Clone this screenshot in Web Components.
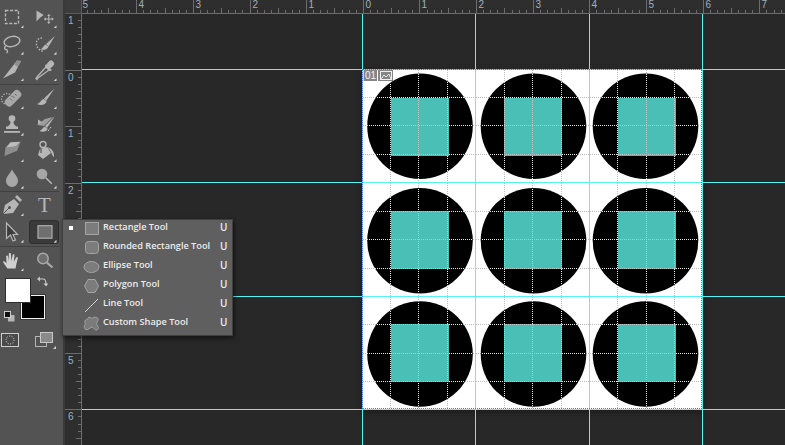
<!doctype html>
<html><head><meta charset="utf-8"><style>
html,body{margin:0;padding:0;width:785px;height:445px;overflow:hidden;background:#282828}
</style></head><body>
<ps-app></ps-app>
<script>
const S = '#b6b6b6';
const ICONS = {
  marquee: `<rect x="5.5" y="5.5" width="13" height="13" fill="none" stroke="${S}" stroke-width="1.4" stroke-dasharray="3 1.6"/>`,
  move: `<path d="M3.5 5.5v11l3.2-3.4 4-3z" fill="${S}"/><path d="M15.8 10v8M11.800 14h8" stroke="${S}" stroke-width="1.1"/><path d="M15.8 9l-1.700 2h3.400zM15.800 19l-1.700-2h3.400zM10.800 14l2-1.700v3.400zM20.800 14l-2-1.700v3.400z" fill="${S}"/>`,
  lasso: `<ellipse cx="12" cy="9.5" rx="8" ry="5" transform="rotate(-12 12 9.5)" fill="none" stroke="${S}" stroke-width="1.5"/><path d="M6 14c-2 1-2 3 0 3.5s2 2.5.5 3.5" fill="none" stroke="${S}" stroke-width="1.3"/>`,
  quick: `<path d="M9 6c-4 0-6 3-5.500 6.500S7 19 10 19" fill="none" stroke="${S}" stroke-width="1.4" stroke-dasharray="1.500 1.500"/><path d="M22 4l-9 8 2.500 2.500z" fill="${S}"/><path d="M12.500 12.500c-2 1-2 3-5 5 3 .8 7 .5 8-3z" fill="${S}"/>`,
  knife: `<path d="M21 3l-4-.4L3 20.500 15 14.500z" fill="${S}"/><path d="M17 2.600L21 3l-3.500 6-3.500-3z" fill="#8f8f8f"/>`,
  dropper: `<path d="M5 20l-1 1.500-1-.8 1-1.700L13 9l3 3z" fill="none" stroke="${S}" stroke-width="1.300"/><path d="M13 6l6 6-2.200 1.200-5-5z" fill="${S}"/><rect x="14.500" y="2.500" width="6" height="7.500" rx="2.500" transform="rotate(45 17.500 6.200)" fill="${S}"/>`,
  heal: `<circle cx="7" cy="13" r="5.500" fill="none" stroke="${S}" stroke-width="1.300" stroke-dasharray="1.200 1.500"/><rect x="3.500" y="8" width="19" height="8.500" rx="3.500" transform="rotate(-45 13 12.200)" fill="#a8a8a8"/><path d="M10 12.500l2 2M12.500 10l2 2M15 8l1.500 1.500M10.500 9.500l1 1" stroke="#666" stroke-width="1"/>`,
  brush: `<path d="M21.500 2.500L11 12.500l2.200 2.200z" fill="${S}"/><path d="M10.500 13c-2.500.5-2.500 3.500-6.500 5 3 1.800 9 1.300 9.500-3z" fill="${S}"/>`,
  stamp: `<circle cx="12" cy="5.500" r="3.300" fill="${S}"/><path d="M10.500 8h3c0 3.500 1 4 3 5.500H18V16H6v-2.500h1.500c2-1.500 3-2 3-5.500z" fill="${S}"/><rect x="4" y="18" width="16" height="1.800" fill="${S}"/>`,
  history: `<path d="M4 12l8-6 8-2-9 9z" fill="${S}" opacity=".75"/><path d="M22 3L12 13l2 2z" fill="${S}"/><path d="M11.500 13.500c-1.500 1-2 3-5 4.500 2.500 1.200 8 1 8-2.500z" fill="${S}"/><path d="M9 9L5 6.500v5z" fill="${S}"/><path d="M15 18l3-4" stroke="#eee" stroke-dasharray="1 1"/>`,
  eraser: `<path d="M10.500 3.300l10-.6-4.500 4.800-10.500 1.500z" fill="#bdbdbd"/><path d="M5.500 8.500L16 7.300l4.500-4.600-3.300 9L4.500 17z" fill="#8e8e8e"/>`,
  bucket: `<path d="M7 10l7-2 4 6-8 6-5-4z" fill="${S}"/><circle cx="10" cy="5.500" r="3" fill="none" stroke="${S}" stroke-width="1.400"/><path d="M8 10v4" stroke="#666" stroke-width="1.500"/><path d="M14 8c4 1 7.500 4 7 10-2.500-1-1.500-5-7-10z" fill="${S}"/>`,
  drop: `<path d="M12 3.500c2.500 5 6 7 6 11.500a6 6 0 0 1-12 0c0-4.500 3.500-6.500 6-11.500z" fill="#a8a8a8"/>`,
  dodge: `<circle cx="9" cy="8" r="5.300" fill="#a6a6a6"/><path d="M12.800 11.800l6 6" stroke="${S}" stroke-width="1.500"/>`,
  pen: `<path d="M3 21l2-9 9-6 5 5-6 9z" fill="${S}"/><path d="M3 21l6-6" stroke="#555" stroke-width="1"/><circle cx="9.500" cy="14.500" r="1.500" fill="#555"/><path d="M15 4l2-2 5 5-2 2z" fill="${S}"/>`,
  arrow: `<path d="M6.500 3v15.500l4-3.500 2.500 6 2.500-1-2.500-5.500h4.500z" fill="#3c3c3c" stroke="${S}" stroke-width="1.200"/>`,
  rect: `<rect x="5" y="5.700" width="14" height="12.500" fill="#6f6f6f" stroke="#b5b5b5" stroke-width="1.100"/>`,
  hand: `<g transform="translate(1.400 3.200) scale(.86)"><path d="M7 20c-2-3-5-6-5-8 1-1 3 0 4 2.500L5.500 6c0-1.500 2-1.500 2.300 0l1 5.500-.2-8c0-1.700 2.400-1.700 2.500 0l.5 8L13 4.500c.3-1.500 2.300-1.300 2.200.2l-.7 7.500L17 7.500c.7-1.300 2.500-.7 2.100.7L17 17l-.5 3z" fill="#d0d0d0"/></g>`,
  zoom: `<circle cx="10" cy="10.500" r="5.200" fill="#6f6f6f" stroke="#a8a8a8" stroke-width="1.500"/><path d="M14 14.700l5.500 4.800" stroke="#a8a8a8" stroke-width="2.200"/>`
};
const MENU = {
  rect: `<rect x="2.500" y="2.500" width="13" height="12" fill="#7c7c7c" stroke="#a4a4a4"/>`,
  round: `<rect x="2.500" y="2.500" width="13" height="12" rx="3" fill="#7c7c7c" stroke="#a4a4a4"/>`,
  ell: `<ellipse cx="8.500" cy="9" rx="7.500" ry="5.500" fill="#7c7c7c" stroke="#a4a4a4"/>`,
  poly: `<path d="M5 2.500h7L15.500 9 12 15.500H5L1.500 9z" fill="#7c7c7c" stroke="#a4a4a4"/>`,
  line: `<path d="M2 16L15 3" stroke="#d0d0d0" stroke-width="1"/>`,
  shape: `<path d="M6 2c2 1 3 1.500 5 .5s5 .5 4 3-2 2-1 4 2.500 3 .5 5-3-1-5-2-4 3-6.500 2-2-3-1-5-1-3 0-4 2.500-.5 4-3.500z" fill="#7b7b7b" stroke="#a4a4a4"/>`
};

class Base extends HTMLElement {
  constructor() {
    super();
    this.attachShadow({ mode: 'open' });
  }
  connectedCallback() {
    this.shadowRoot.innerHTML = this.render();
  }
}

class PsTool extends Base {
  render() {
    const name = this.getAttribute('icon');
    const active = this.hasAttribute('active');
    const corner = this.hasAttribute('nocorner') ? '' : '<i></i>';
    const body = name === 'type'
      ? '<span>T</span>'
      : `<svg width="24" height="24" viewBox="0 0 24 24">${ICONS[name]}</svg>`;
    return `<style>
      :host{display:flex;align-items:center;justify-content:center;position:relative;height:26.5px;min-width:0}
      svg{display:block;position:relative;flex:none}
      span{font:21px/24px "Liberation Serif",serif;color:#b6b6b6;position:relative}
      i{position:absolute;left:calc(50% + 9px);top:calc(50% + 8px);width:3px;height:3px;background:#d0d0d0;clip-path:polygon(100% 0,100% 100%,0 100%)}
      b{position:absolute;left:1px;right:2px;top:1px;bottom:1.500px;background:#3a3a3a;border:1px solid #2e2e2e;border-radius:3px;box-sizing:border-box}
    </style>${active ? '<b></b>' : ''}${body}${corner}`;
  }
}
customElements.define('ps-tool', PsTool);

class PsColors extends Base {
  render() {
    return `<style>
      :host{display:block;position:relative;height:51px;margin-top:2.500px}
      div{position:absolute;box-sizing:border-box}
      .fg{left:5px;top:2px;width:26px;height:25px;background:#fff;border:1px solid #2f2f2f;z-index:1}
      .bg{left:21px;top:19px;width:24px;height:24px;background:#000;border:1px solid #f2f2f2;outline:1px solid #3a3a3a}
      svg{position:absolute}
    </style>
    <div class="fg"></div><div class="bg"></div>
    <svg style="left:36px;top:0" width="12" height="12" viewBox="0 0 12 12"><path d="M3 3h4c2 0 3 1 3 5" fill="none" stroke="#c8c8c8" stroke-width="1.200"/><path d="M4 .5L1 3l3 2.500zM7.500 7.500h5L10 10.500z" fill="#c8c8c8"/></svg>
    <svg style="left:3px;top:34px" width="12" height="12" viewBox="0 0 12 12"><rect x="5" y="5" width="6.500" height="6.500" fill="#b5b5b5"/><rect x="1.500" y="1.500" width="6" height="6" fill="#111" stroke="#cfcfcf"/></svg>`;
  }
}
customElements.define('ps-colors', PsColors);

class PsBottom extends Base {
  render() {
    return `<style>
      :host{display:flex;height:26px;position:relative}
      svg{position:absolute;top:5px}
      i{position:absolute;left:53px;top:19px;width:3px;height:3px;background:#d0d0d0;clip-path:polygon(100% 0,100% 100%,0 100%)}
    </style>
    <svg style="left:1px;top:6px" width="18" height="14" viewBox="0 0 18 14"><rect x=".5" y=".5" width="17" height="13" fill="#4a4a4a" stroke="#d0d0d0"/><circle cx="9" cy="7" r="4" fill="none" stroke="#e0e0e0" stroke-dasharray="1 1.500"/></svg>
    <svg style="left:35px" width="18" height="15" viewBox="0 0 18 15"><rect x=".5" y="4.500" width="11" height="10" fill="none" stroke="#b5b5b5"/><rect x="5.500" y=".5" width="12" height="10" fill="#8a8a8a" stroke="#c8c8c8"/></svg>
    <i></i>`;
  }
}
customElements.define('ps-bottom', PsBottom);

class PsToolbar extends Base {
  render() {
    const row = (a, b, extra = '') => `<ps-tool icon="${a}"></ps-tool><ps-tool icon="${b}" ${extra}></ps-tool>`;
    return `<style>
      :host{display:block;width:63px;height:445px;background:#535353;flex:none;overflow:hidden}
      .g{display:grid;grid-template-columns:23px 33px;column-gap:5px}
      hr{height:1px;width:59px;margin:0;border:0;background:#404040}
    </style>
    <div class="g" style="padding-top:4px">${row('marquee','move')}${row('lasso','quick')}${row('knife','dropper')}</div>
    <hr style="margin-top:.5px">
    <div class="g">${row('heal','brush')}${row('stamp','history')}${row('eraser','bucket')}${row('drop','dodge')}</div>
    <hr>
    <div class="g">${row('pen','type','nocorner')}<ps-tool icon="arrow"></ps-tool><ps-tool icon="rect" active></ps-tool></div>
    <hr style="margin-top:1px">
    <div class="g"><ps-tool icon="hand"></ps-tool><ps-tool icon="zoom" nocorner></ps-tool></div>
    <ps-colors></ps-colors>
    <ps-bottom></ps-bottom>`;
  }
}
customElements.define('ps-toolbar', PsToolbar);

class PsRuler extends Base {
  render() {
    const v = this.hasAttribute('vertical');
    const len = v ? 431 : 703;
    const zero = v ? 56 : 281.3;
    const u = 56.65;
    const step = u / 8;
    let ticks = '';
    let text = '';
    const first = Math.ceil(-zero / step) - 8;
    const last = Math.floor((len - zero) / step);
    for (let i = first; i <= last; i++) {
      const p = Math.floor(zero + i * step) + 0.5;
      const m = ((i % 8) + 8) % 8;
      const size = m === 0 ? (v ? 16 : 13) : m === 4 ? 5 : 3;
      if (v) ticks += `M${16 - size} ${p}H16`;
      else ticks += `M${p} ${13 - size}V13`;
      if (m === 0) {
        const n = Math.abs(i / 8);
        if (v) text += `<text x="3" y="${p + 10}">${n}</text>`;
        else text += `<text x="${p + 2}" y="8">${n}</text>`;
      }
    }
    const w = v ? 17 : len, h = v ? len : 14;
    const base = v ? `M16.500 0V${len}` : `M0 13.500H${len}`;
    return `<style>
      :host{display:block;background:#2e2e2e;flex:none;width:${w}px;height:${h}px;overflow:hidden}
      svg{display:block}
      text{font:10px "Liberation Sans",sans-serif;fill:#9db0c0}
    </style>
    <svg width="${w}" height="${h}" viewBox="0 0 ${w} ${h}" shape-rendering="crispEdges"><path d="${ticks}${base}" stroke="#6c6c6c" stroke-width="1" fill="none"/>${text}</svg>`;
  }
}
customElements.define('ps-ruler', PsRuler);

class PsCell extends Base {
  render() {
    const a = n => parseFloat(this.getAttribute(n));
    const w = a('w'), h = a('h'), cx = a('cx'), cy = a('cy'), tx = a('tx'), ty = a('ty'), ts = a('ts');
    const xs = this.getAttribute('gx').split(',').map(Number);
    const ys = this.getAttribute('gy').split(',').map(Number);
    const lines = xs.map(x => `M${x + .5} 0V${h}`).join('') + ys.map(y => `M0 ${y + .5}H${w}`).join('');
    return `<style>:host{display:block;width:${w}px;height:${h}px}svg{display:block}</style>
    <svg width="${w}" height="${h}" viewBox="0 0 ${w} ${h}">
      <defs>
        <clipPath id="c"><circle cx="${cx}" cy="${cy}" r="52.800"/></clipPath>
        <clipPath id="t"><rect x="${tx}" y="${ty}" width="${ts}" height="${ts}"/></clipPath>
      </defs>
      <rect width="${w}" height="${h}" fill="#fff"/>
      <path d="${lines}" stroke="#bdbdbd" stroke-width="1" stroke-dasharray="1 1" shape-rendering="crispEdges"/>
      <circle cx="${cx}" cy="${cy}" r="52.800" fill="#000"/>
      <path d="${lines}" stroke="#e8e8e8" stroke-width="1" stroke-dasharray="1 1" shape-rendering="crispEdges" clip-path="url(#c)"/>
      <rect x="${tx}" y="${ty}" width="${ts}" height="${ts}" fill="#4abfb5" shape-rendering="crispEdges"/>
      <path d="${lines}" stroke="#b7c9c6" stroke-width="1" stroke-dasharray="1 1" shape-rendering="crispEdges" clip-path="url(#t)"/>
    </svg>`;
  }
}
customElements.define('ps-cell', PsCell);

class PsBoard extends Base {
  render() {
    const X = [363, 476, 590], W = [113, 114, 112];
    const Y = [70, 183, 297], H = [113, 114, 112];
    const CX = [420, 533.5, 645.5], CY = [126.3, 240.7, 354];
    const TX = [391, 504, 618], TY = [98, 211, 324];
    const GX = [[390,418,447],[504,532,561],[617,646,674]];
    const GY = [[97,125,154],[211,239,268],[324,353,381]];
    let cells = '';
    for (let r = 0; r < 3; r++) for (let c = 0; c < 3; c++) {
      cells += `<ps-cell w="${W[c]}" h="${H[r]}" cx="${CX[c] - X[c]}" cy="${CY[r] - Y[r]}" tx="${TX[c] - X[c]}" ty="${TY[r] - Y[r]}" ts="58" gx="${GX[c].map(v => v - X[c])}" gy="${GY[r].map(v => v - Y[r])}"></ps-cell>`;
    }
    return `<style>:host{display:grid;position:absolute;left:281px;top:56px;grid-template-columns:113px 114px 112px;grid-template-rows:113px 114px 112px;box-shadow:0 3px 8px rgba(0,0,0,.35)}</style>${cells}`;
  }
}
customElements.define('ps-board', PsBoard);

class PsBadge extends Base {
  render() {
    return `<style>
      :host{position:absolute;left:281px;top:56px;display:flex;gap:1px}
      div{height:11px;width:14px;background:#858585;display:flex;align-items:center;justify-content:center;border-left:1px solid #d8d8d8;box-sizing:border-box}
      span{font:10px/11px "Liberation Sans",sans-serif;color:#f4f4f4;letter-spacing:0}
      div+div{width:15px;border-left:0}
    </style><div><span>01</span></div><div><svg width="12" height="9" viewBox="0 0 12 9"><rect x=".5" y=".5" width="11" height="8" fill="none" stroke="#f0f0f0"/><path d="M1 8l3-4 2 2 3-3 2 5" fill="none" stroke="#f0f0f0" stroke-width=".9"/></svg></div>`;
  }
}
customElements.define('ps-badge', PsBadge);

class PsCanvas extends Base {
  render() {
    const vg = [280, 393, 507, 620], hg = [55, 168, 282, 395];
    const g = vg.map(x => `<i style="left:${x}px;top:0;bottom:0;width:1px"></i>`).join('')
      + hg.map(y => `<i style="top:${y}px;left:0;right:0;height:1px"></i>`).join('');
    return `<style>
      :host{display:block;position:relative;flex:1;background:#282828;overflow:hidden}
      i{position:absolute;background:#55f3f3}
      .frame{position:absolute;left:280px;top:55px;width:340px;height:340px;box-sizing:border-box;border:1px dotted #3c7dff}
    </style><ps-board></ps-board>${g}<div class="frame"></div><ps-badge></ps-badge>`;
  }
}
customElements.define('ps-canvas', PsCanvas);

class PsMenuItem extends Base {
  render() {
    const on = this.hasAttribute('checked');
    return `<style>
      :host{display:flex;align-items:center;height:19px;box-sizing:border-box;padding:0 0 5px 6px;font:600 9.200px/14px "Open Sans",sans-serif;color:#ececec}
      .dot{width:4px;height:4px;background:${on ? '#fff' : 'transparent'};margin:2px 10px 0 0;flex:none}
      svg{flex:none;margin:3px 2px 0 0;overflow:visible}
      .t{flex:1;white-space:nowrap}
      .k{width:12px;flex:none;font-size:10px}
    </style><span class="dot"></span><svg width="18" height="18" viewBox="0 0 18 18">${MENU[this.getAttribute('icon')]}</svg><span class="t"><slot></slot></span><span class="k">U</span>`;
  }
}
customElements.define('ps-menu-item', PsMenuItem);

class PsMenu extends Base {
  render() {
    return `<style>
      :host{position:absolute;left:62px;top:219px;width:171px;height:117px;box-sizing:border-box;background:#5f5f5f;border:1px solid #3f3f3f;box-shadow:1px 2px 5px rgba(0,0,0,.55);z-index:5}
    </style><slot></slot>`;
  }
}
customElements.define('ps-menu', PsMenu);

class PsApp extends Base {
  render() {
    return `<style>
      :host{display:flex;position:relative;width:785px;height:445px;overflow:hidden}
      .strip{width:2px;background:#3a3a3a;flex:none}
      .main{flex:1;display:flex;flex-direction:column;min-width:0}
      .top{display:flex;flex:none}
      .corner{width:17px;height:14px;background:#3c3c3c;flex:none;border-right:1px solid #5a5a5a;border-bottom:1px solid #5a5a5a;box-sizing:border-box}
      .bot{display:flex;flex:1;min-height:0}
    </style>
    <ps-toolbar></ps-toolbar><div class="strip"></div>
    <div class="main">
      <div class="top"><div class="corner"></div><ps-ruler></ps-ruler></div>
      <div class="bot"><ps-ruler vertical></ps-ruler><ps-canvas></ps-canvas></div>
    </div>
    <ps-menu>
      <ps-menu-item icon="rect" checked>Rectangle Tool</ps-menu-item>
      <ps-menu-item icon="round">Rounded Rectangle Tool</ps-menu-item>
      <ps-menu-item icon="ell">Ellipse Tool</ps-menu-item>
      <ps-menu-item icon="poly">Polygon Tool</ps-menu-item>
      <ps-menu-item icon="line">Line Tool</ps-menu-item>
      <ps-menu-item icon="shape">Custom Shape Tool</ps-menu-item>
    </ps-menu>`;
  }
}
customElements.define('ps-app', PsApp);
</script>
</body></html>
